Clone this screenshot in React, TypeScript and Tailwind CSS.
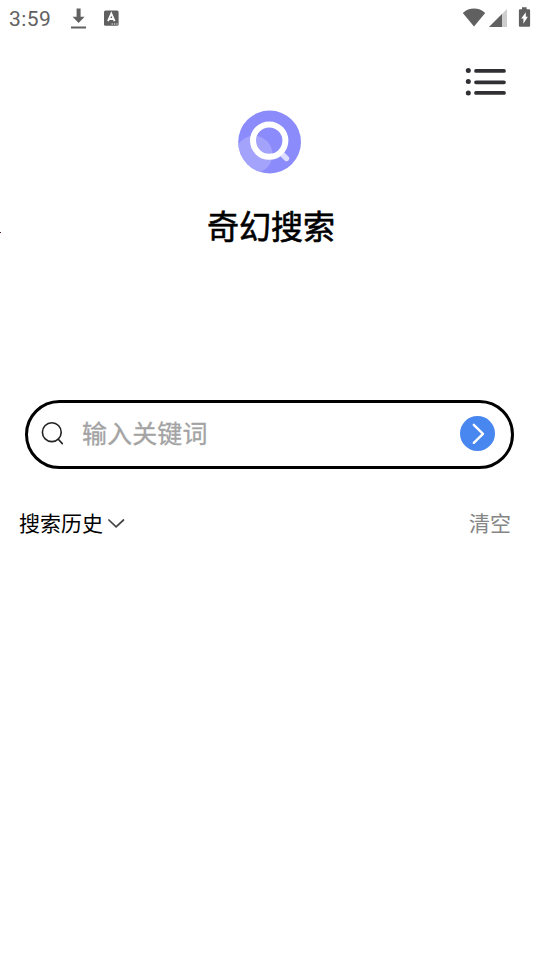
import React from 'react'

function StatusBar() {
  return (
    <div className="flex h-[36px] items-start justify-between text-[#616161]">
      <div className="flex items-start">
        <span className="ml-[9px] mt-[7px] w-[60px] font-['Roboto',sans-serif] text-[21px] leading-[24px] tracking-[0.4px]">
          3:59
        </span>
        <svg className="mt-[8px] h-[21px] w-[20px]" viewBox="0 0 20 21" fill="currentColor">
          <path d="M7.6 0.6h4v8.2h4L9.6 15 3.6 8.8h4zM2 18.6h15v1.8H2z" />
        </svg>
        <svg className="ml-[14px] mt-[9px] h-[19px] w-[18px]" viewBox="0 0 18 19">
          <rect x="1" y="1.4" width="14.6" height="15.4" rx="1.6" fill="#606060" />
          <path
            d="M5 12.2 8.3 4.6l3.3 7.6M6.1 10h4.4"
            fill="none"
            stroke="#fff"
            strokeWidth="1.8"
          />
          <path d="M8.6 14.4h1.2v1H8.6zM11 14.4h1.2v1H11zM13.3 14.4h1.2v1h-1.2z" fill="#fff" />
        </svg>
      </div>
      <svg className="mr-[8px] mt-[5px] h-[24px] w-[72px]" viewBox="0 0 72 24">
        <path d="M2.8 7.9C9 2 19 2 25.2 7.9L14 21.6z" fill="#606060" />
        <path d="M47 4v18H29z" fill="#cdcdcd" />
        <path d="M42 9v13H29z" fill="#606060" />
        <path
          d="M62 2.3h4.6v1.9h2.2c.8 0 1.3.5 1.3 1.3v15c0 .8-.5 1.3-1.3 1.3h-8.6c-.8 0-1.3-.5-1.3-1.3v-15c0-.8.5-1.3 1.3-1.3H62z"
          fill="#606060"
        />
        <path d="M65.8 7.2v4.6h2l-4.4 7v-5.3h-2.2z" fill="#fff" />
      </svg>
    </div>
  )
}

function MenuIcon() {
  return (
    <svg className="h-[32px] w-[44px]" viewBox="0 0 44 32">
      <g fill="#302f33">
        <circle cx="4.3" cy="4.5" r="2.5" />
        <circle cx="4.3" cy="15.6" r="2.5" />
        <circle cx="4.3" cy="27" r="2.5" />
      </g>
      <path
        d="M12 4.9h28M12 16.3h28M12 26.9h28"
        stroke="#302f33"
        strokeWidth="3.7"
        strokeLinecap="round"
      />
    </svg>
  )
}

function Logo() {
  return (
    <svg className="h-[64px] w-[64px]" viewBox="0 0 64 64">
      <defs>
        <clipPath id="disc">
          <circle cx="31.6" cy="32" r="31.4" />
        </clipPath>
      </defs>
      <circle cx="31.6" cy="32" r="31.4" fill="#8b8bfb" />
      <circle cx="16" cy="44.3" r="18.5" fill="#a4a3fc" clipPath="url(#disc)" />
      <path d="M43.5 43.5l5 5" stroke="#dcdcfe" strokeWidth="5.4" strokeLinecap="round" />
      <circle cx="31.2" cy="30.6" r="16.2" fill="none" stroke="#fff" strokeWidth="6" />
    </svg>
  )
}

export default function App() {
  return (
    <div className="relative flex h-[960px] w-[540px] flex-col bg-white font-['Noto_Sans_CJK_SC',sans-serif]">
      <StatusBar />

      <div className="absolute left-0 top-[232px] h-px w-px bg-[#4a1f2a]" />

      <header className="flex h-[74px] items-start justify-end pr-[32px] pt-[30px]">
        <button>
          <MenuIcon />
        </button>
      </header>

      <div className="flex h-[290px] flex-col items-center">
        <Logo />
        <h1 className="ml-[2px] mt-[27px] scale-y-[1.03] text-[32px] font-normal leading-[48px] text-black [-webkit-text-stroke:0.6px_#000]">
          奇幻搜索
        </h1>
      </div>

      <div className="ml-[25px] flex h-[69px] w-[489px] items-center rounded-full border-[3px] border-black pl-[12px] pr-[16px]">
        <svg
          className="mb-[2px] h-[26px] w-[26px]"
          viewBox="0 0 26 26"
          fill="none"
          stroke="#222"
          strokeWidth="1.6"
          strokeLinecap="round"
        >
          <circle cx="11.8" cy="11.2" r="9.4" />
          <path d="M18.3 18.3l4 4.3" />
        </svg>
        <span className="mb-[6px] ml-[16px] flex-1 text-[25px] leading-[38px] tracking-[0.1px] text-[#a3a3a3] [-webkit-text-stroke:0.3px_#a3a3a3]">
          输入关键词
        </span>
        <button className="mb-[2px]">
          <svg className="h-[35px] w-[35px]" viewBox="0 0 35 35">
            <circle cx="17.5" cy="17.5" r="17.5" fill="#4886f0" />
            <path
              d="M13.8 8.8l9.2 9-9.2 9"
              fill="none"
              stroke="#fff"
              strokeWidth="2.4"
              strokeLinecap="round"
              strokeLinejoin="round"
            />
          </svg>
        </button>
      </div>

      <div className="mt-[37px] flex items-center justify-between pl-[19px] pr-[29px] text-[21px] leading-[32px]">
        <div className="flex items-center">
          <span className="text-black">搜索历史</span>
          <svg
            className="ml-[4px] mt-[3px] h-[12px] w-[18px]"
            viewBox="0 0 18 12"
            fill="none"
            stroke="#444"
            strokeWidth="1.7"
            strokeLinecap="round"
          >
            <path d="M1.9 2l7.2 6.8L16.5 2" />
          </svg>
        </div>
        <button className="text-[#858585]">清空</button>
      </div>
    </div>
  )
}
